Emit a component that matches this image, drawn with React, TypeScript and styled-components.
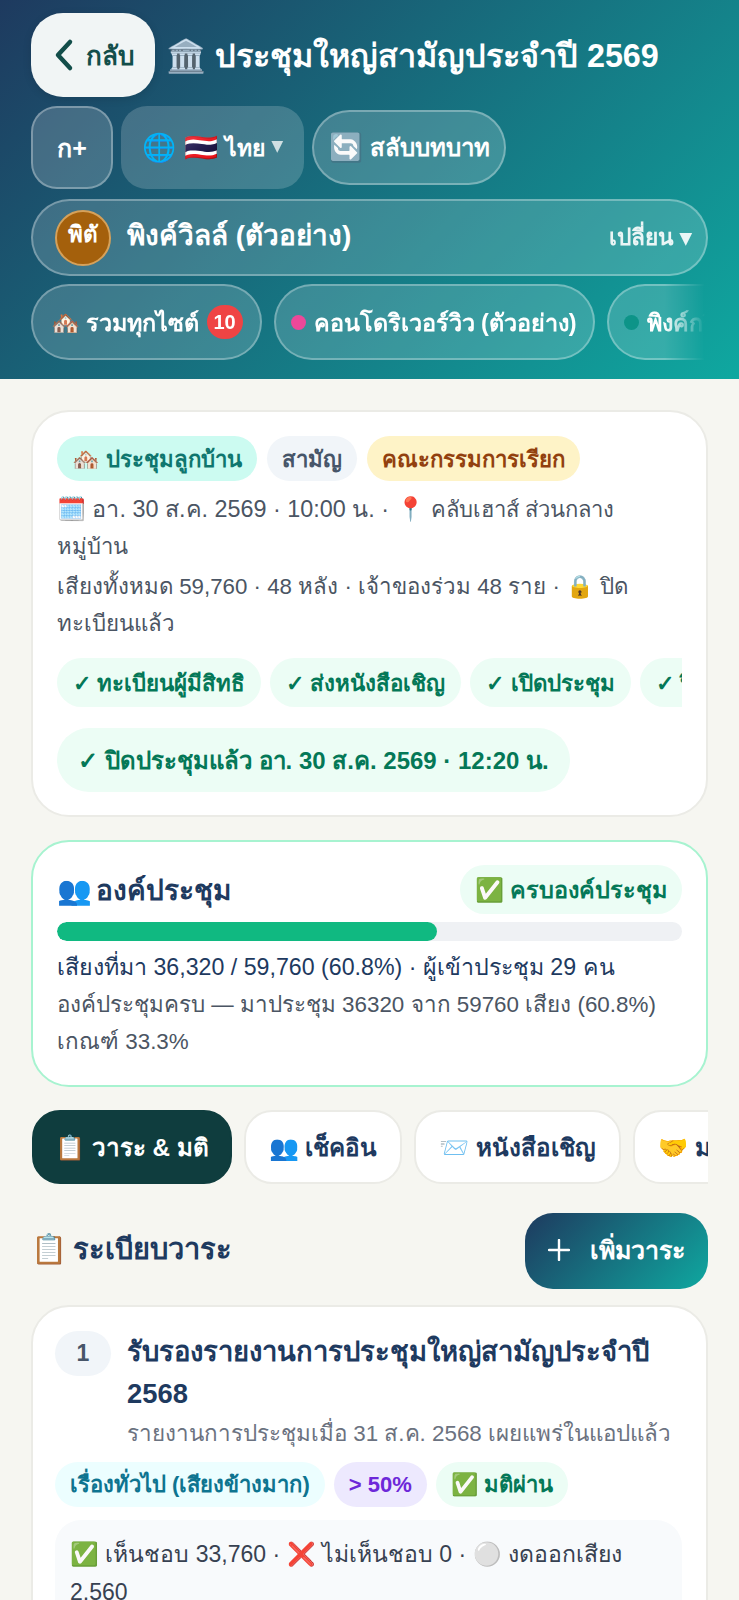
import styled, { createGlobalStyle } from "styled-components";

const GlobalStyle = createGlobalStyle`
  html, body {
    margin: 0;
    padding: 0;
    background: #f6f6f1;
    font-family: "Liberation Sans", Arial, "Noto Sans", sans-serif;
  }
  * { box-sizing: border-box; }
`;

const Page = styled.div`
  width: 739px;
  height: 1600px;
  overflow: hidden;
`;

const Header = styled.header`
  height: 379px;
  padding: 13px 31px 0;
  background: linear-gradient(135deg, #1e3a5f 0%, #0fa8a0 100%);
  display: flex;
  flex-direction: column;
  color: #fff;
`;

const TitleRow = styled.div`
  display: flex;
  align-items: center;
  gap: 11px;
  height: 84px;
`;

const BackButton = styled.button`
  width: 124px;
  height: 84px;
  border: none;
  border-radius: 32px;
  background: #f1f5f5;
  color: #134e4a;
  display: flex;
  align-items: center;
  justify-content: center;
  gap: 10px;
  font: 700 26px "Liberation Sans", sans-serif;
  box-shadow: 0 2px 8px rgba(0, 0, 0, 0.12);
`;

const Title = styled.h1`
  margin: 0;
  font-size: 32.3px;
  font-weight: 700;
  white-space: nowrap;
`;

const ControlRow = styled.div`
  display: flex;
  align-items: center;
  gap: 8px;
  margin-top: 9px;
  height: 83px;
`;

const GlassButton = styled.div<{ $w: number; $h: number; $size: number; $pill?: boolean; $plain?: boolean }>`
  width: ${(p) => p.$w}px;
  height: ${(p) => p.$h}px;
  border-radius: ${(p) => (p.$pill ? "40px" : "26px")};
  background: rgba(255, 255, 255, 0.18);
  border: ${(p) => (p.$plain ? "none" : "2px solid rgba(255, 255, 255, 0.3)")};
  display: flex;
  align-items: center;
  justify-content: center;
  gap: 7px;
  font-size: ${(p) => p.$size}px;
  font-weight: 700;
  white-space: nowrap;
  flex-shrink: 0;
`;

const BigEmoji = styled.span`
  font-size: 27.5px;
`;

const Caret = styled.span`
  font-size: 21px;
  opacity: 0.75;
  margin-top: -5px;
`;

const SitePicker = styled.div`
  margin-top: 10px;
  height: 77px;
  border-radius: 39px;
  background: rgba(255, 255, 255, 0.16);
  border: 2px solid rgba(255, 255, 255, 0.3);
  display: flex;
  align-items: center;
  padding: 0 14px 0 22px;
`;

const Avatar = styled.div`
  width: 56px;
  height: 56px;
  border-radius: 50%;
  background: #a4600c;
  border: 2px solid #d6a15a;
  display: flex;
  align-items: center;
  justify-content: center;
  font-size: 22.5px;
  font-weight: 700;
  margin-right: 16px;
  padding-bottom: 8px;
`;

const SiteName = styled.span`
  font-size: 28px;
  font-weight: 700;
  flex: 1;
  padding-bottom: 5px;
`;

const SwitchLabel = styled.span`
  font-size: 22.7px;
  font-weight: 700;
  opacity: 0.9;
  padding-bottom: 2px;
`;

const ChipScroller = styled.div`
  margin-top: 8px;
  display: flex;
  gap: 12px;
  width: 674px;
  overflow: hidden;
  mask-image: linear-gradient(to right, #000 94%, transparent 100%);
`;

const SiteChip = styled.div<{ $dotted?: boolean }>`
  height: 76px;
  padding: ${(p) => (p.$dotted ? "0 16px 0 15px" : "0 17px 0 18px")};
  border-radius: 38px;
  background: rgba(255, 255, 255, 0.16);
  border: 2px solid rgba(255, 255, 255, 0.3);
  display: flex;
  align-items: center;
  gap: 7px;
  font-size: 23.4px;
  font-weight: 700;
  white-space: nowrap;
  flex-shrink: 0;
`;

const Dot = styled.span<{ $color: string }>`
  width: 15px;
  height: 15px;
  border-radius: 50%;
  background: ${(p) => p.$color};
  margin-right: 1px;
`;

const CountBadge = styled.span`
  width: 36px;
  height: 34px;
  border-radius: 17px;
  background: #ef4444;
  display: flex;
  align-items: center;
  justify-content: center;
  font-size: 20px;
`;

const Main = styled.main`
  padding: 31px 31px 0;
  display: flex;
  flex-direction: column;
`;

const Card = styled.section<{ $accent?: boolean }>`
  background: #fff;
  border: 2px solid ${(p) => (p.$accent ? "#a7f3d0" : "#ebebe6")};
  border-radius: 38px;
  padding: 24px 24px 23px;
`;

const BadgeRow = styled.div`
  display: flex;
  gap: 10px;
  align-items: center;
`;

const Badge = styled.span<{ $bg: string; $fg: string }>`
  height: 45px;
  padding: 0 15px;
  border-radius: 23px;
  background: ${(p) => p.$bg};
  color: ${(p) => p.$fg};
  display: inline-flex;
  align-items: center;
  font-size: 22.2px;
  font-weight: 700;
  white-space: nowrap;
`;

const MetaLine = styled.div<{ $size: number; $gap?: number }>`
  margin-top: ${(p) => p.$gap ?? 0}px;
  font-size: ${(p) => p.$size}px;
  line-height: 37px;
  color: #4b5563;
`;

const Place = styled.span`
  font-size: 22px;
`;

const StepScroller = styled.div`
  display: flex;
  gap: 9px;
  margin-top: 16px;
  overflow: hidden;
`;

const Step = styled.span`
  height: 49px;
  padding: 0 16px;
  border-radius: 25px;
  background: #ecfdf5;
  color: #047857;
  display: flex;
  align-items: center;
  font-size: 22.3px;
  font-weight: 700;
  white-space: nowrap;
  flex-shrink: 0;
`;

const ClosedNote = styled.div`
  margin-top: 21px;
  height: 64px;
  width: 513px;
  border-radius: 32px;
  background: #ecfdf5;
  color: #047857;
  display: flex;
  align-items: center;
  justify-content: center;
  font-size: 24px;
  font-weight: 700;
  white-space: nowrap;
`;

const QuorumCard = styled(Card)`
  margin-top: 23px;
  height: 247px;
  padding-top: 23px;
`;

const QuorumHead = styled.div`
  display: flex;
  justify-content: space-between;
  align-items: center;
`;

const QuorumTitle = styled.h2`
  margin: 0;
  font-size: 28px;
  font-weight: 700;
  word-spacing: -4px;
  color: #1e3a5f;
`;

const QuorumBadge = styled(Badge)`
  height: 49px;
  border-radius: 25px;
  font-size: 23.4px;
  padding: 0 15px;
`;

const Track = styled.div`
  margin-top: 8px;
  height: 19px;
  border-radius: 10px;
  background: #eff1f4;
  overflow: hidden;
`;

const Fill = styled.div`
  height: 100%;
  border-radius: 10px;
  background: #10b981;
`;

const VoteLine = styled.div`
  margin-top: 8px;
  font-size: 23.2px;
  line-height: 37px;
  color: #1e3a5f;
`;

const QuorumNote = styled.div`
  font-size: 22.4px;
  line-height: 37px;
  color: #4b5563;
`;

const TabScroller = styled.nav`
  margin: 23px 0 0 1px;
  display: flex;
  gap: 12px;
  overflow: hidden;
  width: 676px;
`;

const Tab = styled.div<{ $active?: boolean }>`
  height: 74px;
  padding: ${(p) => (p.$active ? "0 21px" : "0 23px")};
  border-radius: 28px;
  background: ${(p) => (p.$active ? "#0f3d3e" : "#fff")};
  color: ${(p) => (p.$active ? "#fff" : "#1e3a5f")};
  border: 2px solid ${(p) => (p.$active ? "#0f3d3e" : "#ebebe6")};
  display: flex;
  align-items: center;
  gap: 8px;
  font-size: 24.2px;
  font-weight: 700;
  white-space: nowrap;
  flex-shrink: 0;
`;

const SectionHead = styled.div`
  margin-top: 29px;
  display: flex;
  justify-content: space-between;
  align-items: center;
`;

const SectionTitle = styled.h2`
  margin: 0;
  padding-bottom: 4px;
  font-size: 29px;
  font-weight: 700;
  word-spacing: -2px;
  color: #1e3a5f;
`;

const AddButton = styled.button`
  width: 183px;
  height: 76px;
  border: none;
  border-radius: 28px;
  background: linear-gradient(135deg, #1e3a5f 0%, #0fa8a0 100%);
  color: #fff;
  display: flex;
  align-items: center;
  justify-content: center;
  gap: 20px;
  padding-bottom: 3px;
  font: 700 25px "Liberation Sans", sans-serif;
`;

const AgendaCard = styled(Card)`
  margin-top: 16px;
  padding-left: 22px;
`;

const AgendaTop = styled.div`
  display: flex;
  gap: 16px;
  align-items: flex-start;
`;

const AgendaNo = styled.div`
  width: 56px;
  height: 45px;
  flex-shrink: 0;
  border-radius: 23px;
  background: #f1f5f9;
  color: #475569;
  display: flex;
  align-items: center;
  justify-content: center;
  font-size: 23px;
  font-weight: 700;
`;

const AgendaTitle = styled.h3`
  margin: 0;
  font-size: 27.4px;
  font-weight: 700;
  line-height: 42px;
  color: #1e3a5f;
`;

const AgendaSub = styled.div`
  font-size: 22.4px;
  line-height: 38px;
  color: #6b7280;
`;

const TagRow = styled(BadgeRow)`
  margin-top: 9px;
  gap: 9px;
`;

const Tag = styled(Badge)`
  font-size: 22px;
`;

const VoteBox = styled.div`
  margin-top: 13px;
  padding: 15px;
  border-radius: 26px;
  background: #f8fafc;
  font-size: 23px;
  line-height: 38px;
  color: #374151;
`;

function ChevronLeft() {
  return (
    <svg width="24" height="34" viewBox="0 0 24 34" fill="none">
      <path d="M18 4 6 17l12 13" stroke="#134e4a" strokeWidth="4.5" strokeLinecap="round" strokeLinejoin="round" />
    </svg>
  );
}

function Plus() {
  return (
    <svg width="22" height="22" viewBox="0 0 22 22" fill="none">
      <path d="M11 1v20M1 11h20" stroke="#fff" strokeWidth="2.4" strokeLinecap="round" />
    </svg>
  );
}

export default function App() {
  return (
    <Page>
      <GlobalStyle />
      <Header>
        <TitleRow>
          <BackButton>
            <ChevronLeft />
            กลับ
          </BackButton>
          <Title>🏛️ ประชุมใหญ่สามัญประจำปี 2569</Title>
        </TitleRow>
        <ControlRow>
          <GlassButton $w={82} $h={83} $size={25}>ก+</GlassButton>
          <GlassButton $w={183} $h={83} $size={23} $plain>
            <BigEmoji>🌐 🇹🇭</BigEmoji> ไทย <Caret>▾</Caret>
          </GlassButton>
          <GlassButton $w={194} $h={75} $size={24} $pill>
            <BigEmoji>🔄</BigEmoji> สลับบทบาท
          </GlassButton>
        </ControlRow>
        <SitePicker>
          <Avatar>พิตั</Avatar>
          <SiteName>พิงค์วิลล์ (ตัวอย่าง)</SiteName>
          <SwitchLabel>เปลี่ยน ▾</SwitchLabel>
        </SitePicker>
        <ChipScroller>
          <SiteChip>
            🏘️ รวมทุกไซต์ <CountBadge>10</CountBadge>
          </SiteChip>
          <SiteChip $dotted>
            <Dot $color="#ec4899" /> คอนโดริเวอร์วิว (ตัวอย่าง)
          </SiteChip>
          <SiteChip $dotted>
            <Dot $color="#0d9488" /> พิงค์กรีน
          </SiteChip>
        </ChipScroller>
      </Header>
      <Main>
        <Card>
          <BadgeRow>
            <Badge $bg="#ccfbf1" $fg="#0f766e">🏘️ ประชุมลูกบ้าน</Badge>
            <Badge $bg="#f1f5f9" $fg="#475569">สามัญ</Badge>
            <Badge $bg="#fef3c7" $fg="#92400e">คณะกรรมการเรียก</Badge>
          </BadgeRow>
          <MetaLine $size={23.4} $gap={10}>
            🗓️ อา. 30 ส.ค. 2569 · 10:00 น. · 📍 <Place>คลับเฮาส์ ส่วนกลางหมู่บ้าน</Place>
          </MetaLine>
          <MetaLine $size={22.3} $gap={3}>
            เสียงทั้งหมด 59,760 · 48 หลัง · เจ้าของร่วม 48 ราย · 🔒 ปิดทะเบียนแล้ว
          </MetaLine>
          <StepScroller>
            <Step>✓ ทะเบียนผู้มีสิทธิ</Step>
            <Step>✓ ส่งหนังสือเชิญ</Step>
            <Step>✓ เปิดประชุม</Step>
            <Step>✓ ปิดประชุม</Step>
          </StepScroller>
          <ClosedNote>✓ ปิดประชุมแล้ว อา. 30 ส.ค. 2569 · 12:20 น.</ClosedNote>
        </Card>
        <QuorumCard $accent>
          <QuorumHead>
            <QuorumTitle>👥 องค์ประชุม</QuorumTitle>
            <QuorumBadge $bg="#ecfdf5" $fg="#047857">✅ ครบองค์ประชุม</QuorumBadge>
          </QuorumHead>
          <Track>
            <Fill style={{ width: "60.8%" }} />
          </Track>
          <VoteLine>เสียงที่มา 36,320 / 59,760 (60.8%) · ผู้เข้าประชุม 29 คน</VoteLine>
          <QuorumNote>
            องค์ประชุมครบ — มาประชุม 36320 จาก 59760 เสียง (60.8%)
            <br />
            เกณฑ์ 33.3%
          </QuorumNote>
        </QuorumCard>
        <TabScroller>
          <Tab $active>📋 วาระ &amp; มติ</Tab>
          <Tab>👥 เช็คอิน</Tab>
          <Tab>📨 หนังสือเชิญ</Tab>
          <Tab>🤝 มอบฉันทะ</Tab>
        </TabScroller>
        <SectionHead>
          <SectionTitle>📋 ระเบียบวาระ</SectionTitle>
          <AddButton>
            <Plus />
            เพิ่มวาระ
          </AddButton>
        </SectionHead>
        <AgendaCard>
          <AgendaTop>
            <AgendaNo>1</AgendaNo>
            <div>
              <AgendaTitle>รับรองรายงานการประชุมใหญ่สามัญประจำปี 2568</AgendaTitle>
              <AgendaSub>รายงานการประชุมเมื่อ 31 ส.ค. 2568 เผยแพร่ในแอปแล้ว</AgendaSub>
            </div>
          </AgendaTop>
          <TagRow>
            <Tag $bg="#ecfeff" $fg="#0e7490">เรื่องทั่วไป (เสียงข้างมาก)</Tag>
            <Tag $bg="#ede9fe" $fg="#6d28d9">&gt; 50%</Tag>
            <Tag $bg="#ecfdf5" $fg="#047857">✅ มติผ่าน</Tag>
          </TagRow>
          <VoteBox>✅ เห็นชอบ 33,760 · ❌ ไม่เห็นชอบ 0 · ⚪ งดออกเสียง 2,560</VoteBox>
        </AgendaCard>
      </Main>
    </Page>
  );
}
